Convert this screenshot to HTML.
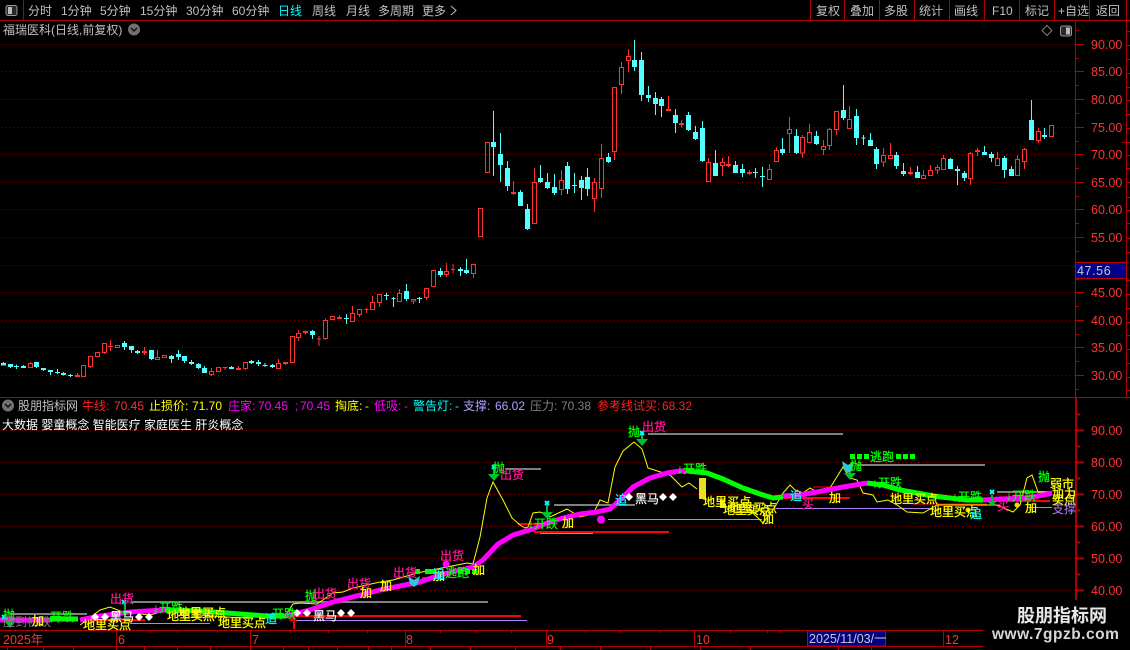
<!DOCTYPE html>
<html><head><meta charset="utf-8"><style>
html,body{margin:0;padding:0;background:#000;width:1130px;height:650px;overflow:hidden}
svg{display:block;position:absolute;left:0;top:0}
text{font-family:"WenQuanYi Zen Hei","Liberation Sans","Noto Sans CJK SC",sans-serif;font-size:12px}
.n{font-family:"Liberation Sans",sans-serif;font-size:12px}
.ax{font-family:"Liberation Sans",sans-serif;font-size:12.5px;fill:#ff3232}
.m{fill:#c0c0c0}
.y{fill:#ffff00;stroke:#ffff00;stroke-width:.3px}
.g{fill:#00ff00;stroke:#00ff00;stroke-width:.3px}
.p{fill:#ff1493;stroke:#ff1493;stroke-width:.3px}
.c{fill:#00ffff;stroke:#00ffff;stroke-width:.3px}
.w{fill:#fff;stroke:#fff;stroke-width:.2px}
.t{fill:#00ffff}
.l{shape-rendering:crispEdges}
</style></head><body>
<svg width="1130" height="650" viewBox="0 0 1130 650" xmlns="http://www.w3.org/2000/svg">
<rect width="1130" height="650" fill="#000"/>

<!-- frame -->
<g class="l" stroke="#b00000" stroke-width="1" fill="none">
<path d="M0 20.5H1130M23.5 0V20.5M810.5 0V20.5M844.5 0V20.5M879.5 0V20.5M914.5 0V20.5M949.5 0V20.5M984.5 0V20.5M1019.5 0V20.5M1054.5 0V20.5M1089.5 0V20.5M1126.5 0V397"/>
<path d="M1075.5 20V397"/>
<path d="M0 397.5H1130"/>
<path d="M0 630.5H983M0 646.5H983"/>
<path d="M116.5 630V646M250.5 630V646M405.5 630V646M546.5 630V646M694.5 630V646M943.5 630V646"/>
<path d="M150.5 630V633M177.5 630V633M217.5 630V633M290.5 630V633M328.5 630V633M367.5 630V633M440.5 630V633M476.5 630V633M511.5 630V633M585.5 630V633M620.5 630V633M659.5 630V633M730.5 630V633M767.5 630V633M780.5 630V633"/>
<path d="M7.5 646V650M43.5 646V650M73.5 646V650M116.5 646V650M144.5 646V650M177.5 646V650M210.5 646V650M250.5 646V650M283.5 646V650M308.5 646V650M337.5 646V650M368.5 646V650M391.5 646V650M430.5 646V650M470.5 646V650M515.5 646V650M560.5 646V650M600.5 646V650M650.5 646V650M700.5 646V650M750.5 646V650M838.5 646V650M871.5 646V650"/>
<!-- axis ticks upper -->
<path d="M1075 44.5H1084M1075 71.5H1084M1075 99.5H1084M1075 127.5H1084M1075 154.5H1084M1075 182.5H1084M1075 209.5H1084M1075 237.5H1084M1075 292.5H1084M1075 320.5H1084M1075 347.5H1084M1075 375.5H1084"/>
<path d="M1075 30.5H1079M1075 58.5H1079M1075 85.5H1079M1075 113.5H1079M1075 141.5H1079M1075 168.5H1079M1075 196.5H1079M1075 223.5H1079M1075 251.5H1079M1075 279.5H1079M1075 306.5H1079M1075 334.5H1079M1075 361.5H1079M1075 389.5H1079"/>
<path d="M1126 31.5H1130M1126 45.5H1130M1126 59.5H1130M1126 73.5H1130M1126 87.5H1130M1126 100.5H1130M1126 114.5H1130M1126 128.5H1130M1122 142.5H1130M1126 155.5H1130M1126 168.5H1130M1126 182.5H1130M1126 197.5H1130M1126 210.5H1130M1126 223.5H1130M1126 238.5H1130M1126 252.5H1130M1126 280.5H1130M1126 294.5H1130M1126 308.5H1130M1126 322.5H1130M1126 335.5H1130M1126 349.5H1130M1126 363.5H1130M1126 377.5H1130M1126 390.5H1130"/>
</g>
<g class="l" stroke="#b00000" stroke-width="2" fill="none">
<path d="M1076 397V600"/>
<path d="M1076 430.5H1084M1076 462.5H1084M1076 494.5H1084M1076 526.5H1084M1076 558.5H1084M1076 590.5H1084"/>
<path d="M1076 414.5H1080M1076 446.5H1080M1076 478.5H1080M1076 510.5H1080M1076 542.5H1080M1076 574.5H1080"/>
</g>

<!-- dotted grids -->
<g class="l" stroke="#800000" stroke-width="1" stroke-dasharray="1 3" fill="none">
<path d="M2 44.5H1075M2 71.5H1075M2 99.5H1075M2 127.5H1075M2 154.5H1075M2 182.5H1075M2 209.5H1075M2 237.5H1075M2 265.5H1075M2 292.5H1075M2 320.5H1075M2 347.5H1075M2 375.5H1075"/>
<path d="M2 430.5H1075M2 462.5H1075M2 494.5H1075M2 526.5H1075M2 558.5H1075M2 590.5H1075"/>
</g>

<!-- toolbar -->
<rect x="6" y="5.5" width="11" height="10" rx="2" fill="#2a2a2a" stroke="#999"/>
<rect x="8" y="7" width="4" height="7" fill="#bbb"/>
<g class="m">
<text x="28" y="15">分时</text>
<text x="61" y="15">1分钟</text>
<text x="100" y="15">5分钟</text>
<text x="140" y="15">15分钟</text>
<text x="186" y="15">30分钟</text>
<text x="232" y="15">60分钟</text>
<text x="278" y="15" class="t">日线</text>
<text x="312" y="15">周线</text>
<text x="346" y="15">月线</text>
<text x="378" y="15">多周期</text>
<text x="422" y="15">更多</text>
<text x="816" y="15">复权</text>
<text x="850" y="15">叠加</text>
<text x="884" y="15">多股</text>
<text x="919" y="15">统计</text>
<text x="954" y="15">画线</text>
<text x="992" y="15">F10</text>
<text x="1025" y="15">标记</text>
<text x="1058" y="15">+自选</text>
<text x="1096" y="15">返回</text>
<text x="3" y="34">福瑞医科(日线,前复权)</text>
</g>
<path d="M451 6l5 4.5-5 4.5" fill="none" stroke="#c0c0c0"/>
<circle cx="134" cy="29.5" r="6" fill="#707070"/>
<path d="M131 28l3 3 3-3" fill="none" stroke="#111" stroke-width="1.5"/>
<path d="M1047 25.5l5 5-5 5-5-5z" fill="none" stroke="#808080"/>
<rect x="1060.5" y="26" width="11" height="10" rx="2" fill="#2a2a2a" stroke="#999"/>
<rect x="1066" y="27.5" width="4" height="7" fill="#bbb"/>

<!-- upper axis labels -->
<g class="ax">
<text class="ax" x="1091" y="49">90.00</text>
<text class="ax" x="1091" y="76">85.00</text>
<text class="ax" x="1091" y="104">80.00</text>
<text class="ax" x="1091" y="132">75.00</text>
<text class="ax" x="1091" y="159">70.00</text>
<text class="ax" x="1091" y="187">65.00</text>
<text class="ax" x="1091" y="214">60.00</text>
<text class="ax" x="1091" y="242">55.00</text>
<text class="ax" x="1091" y="297">45.00</text>
<text class="ax" x="1091" y="325">40.00</text>
<text class="ax" x="1091" y="352">35.00</text>
<text class="ax" x="1091" y="380">30.00</text>
<text class="ax" x="1091" y="435">90.00</text>
<text class="ax" x="1091" y="467">80.00</text>
<text class="ax" x="1091" y="499">70.00</text>
<text class="ax" x="1091" y="531">60.00</text>
<text class="ax" x="1091" y="563">50.00</text>
<text class="ax" x="1091" y="595">40.00</text>
</g>
<rect class="l" x="1075.5" y="262.5" width="51" height="16" fill="#000088" stroke="#c00000"/>
<text class="n" x="1077" y="275" style="font-size:12.5px;fill:#c8c8c8;letter-spacing:.6px">47.56</text>

<!-- candles -->
<g class="l" stroke-width="3">
<g transform="translate(0 280) scale(.33333)">
<path fill="none" stroke="#ff3232" d="M91 246V250M85 251h12V262h-12zM232 279V285M226 286h12V289h-12zM244 257h12V289h-12zM265 229h12V260h-12zM271 261V264M286 218h12V229h-12zM307 191h12V217h-12zM313 218V222M331 180V213M325 199h12V200h-12zM346 196h12V202h-12zM433 201V225M427 214h12V217h-12zM472 210V232M466 233h12V238h-12zM487 226h12V232h-12zM634 264V273M628 274h12V284h-12zM634 285V288M649 263h12V274h-12zM675 261V270M669 262h12V263h-12zM715 258V264M709 265h12V269h-12zM730 248h12V265h-12zM736 266V270M835 237V249M829 250h12V265h-12zM850 248h12V250h-12zM856 251V255M871 169h12V247h-12zM895 150V160M889 161h12V173h-12zM895 174V183"/>
<path fill="#54ffff" stroke="#54ffff" d="M10 246V256M4 250h12V255h-12zM31 252V264M25 253h12V260h-12zM49 254V267M43 259h12V260h-12zM70 255V264M64 259h12V263h-12zM109 246V264M103 247h12V260h-12zM130 264V273M124 265h12V269h-12zM151 270V285M145 271h12V275h-12zM172 267V282M166 277h12V278h-12zM190 276V286M184 280h12V284h-12zM211 282V291M205 286h12V287h-12zM373 183V210M367 190h12V200h-12zM394 198V219M388 199h12V209h-12zM412 210V222M406 214h12V218h-12zM454 210V240M448 211h12V235h-12zM514 225V249M508 229h12V236h-12zM535 210V240M529 223h12V230h-12zM553 228V249M547 229h12V242h-12zM574 240V255M568 247h12V251h-12zM595 249V267M589 253h12V263h-12zM613 258V279M607 265h12V278h-12zM694 258V267M688 262h12V266h-12zM754 240V252M748 244h12V248h-12zM775 240V258M769 247h12V251h-12zM795 249V261M789 256h12V257h-12zM817 252V264M811 256h12V260h-12z"/>
</g>
<g transform="translate(280 200) scale(.33333)">
<path fill="none" stroke="#ff3232" d="M76 391V404M70 394h12V398h-12zM117 408V438M111 417h12V417h-12zM136 355V361M130 362h12V416h-12zM136 417V420M151 350h12V358h-12zM178 346V352M172 353h12V355h-12zM178 356V357M217 318V340M211 341h12V364h-12zM232 329h12V343h-12zM238 344V351M259 324V339M253 328h12V328h-12zM277 288V307M271 308h12V329h-12zM292 284h12V307h-12zM298 308V321M358 267V280M352 281h12V304h-12zM394 299h12V303h-12zM400 304V312M439 264V265M433 266h12V292h-12zM439 293V300M454 211h12V260h-12zM499 189V214M493 215h12V224h-12zM499 225V231M519 192V219M513 209h12V209h-12zM574 194h12V220h-12zM580 190V193M580 221V234M595 26h12V109h-12z"/>
<path fill="#54ffff" stroke="#54ffff" d="M97 390V417M91 394h12V404h-12zM199 342V372M193 355h12V356h-12zM319 279V300M313 286h12V287h-12zM340 291V321M334 296h12V296h-12zM379 252V303M373 274h12V296h-12zM418 291V309M412 295h12V296h-12zM481 204V231M475 214h12V224h-12zM541 201V228M535 208h12V212h-12zM559 177V222M553 211h12V218h-12z"/>
</g>
<g transform="translate(470 30) scale(.33333)">
<path fill="none" stroke="#ff3232" d="M46 337h12V428h-12zM130 453V495M124 488h12V491h-12zM193 414V457M187 458h12V580h-12zM274 420V451M268 452h12V478h-12zM274 479V495M373 444V457M367 458h12V505h-12zM373 506V546M394 342V385M388 386h12V475h-12zM394 476V504M427 173h12V364h-12zM433 365V390M454 96V112M448 113h12V163h-12zM454 164V192M475 57V79M469 80h12V91h-12zM475 92V126M595 198V237M589 238h12V242h-12zM634 270V292M628 280h12V284h-12zM715 384V397M709 398h12V455h-12zM757 384V397M751 398h12V406h-12zM757 407V438M775 378V411M769 404h12V406h-12zM838 420V435M832 427h12V431h-12z"/>
<path fill="#54ffff" stroke="#54ffff" d="M70 243V438M64 337h12V350h-12zM91 309V456M85 373h12V404h-12zM112 393V483M106 415h12V467h-12zM151 480V528M145 487h12V527h-12zM172 522V600M166 538h12V596h-12zM211 405V459M205 445h12V455h-12zM232 429V477M226 457h12V473h-12zM253 432V495M247 472h12V488h-12zM292 396V492M286 409h12V476h-12zM313 429V489M307 466h12V467h-12zM334 438V510M328 451h12V473h-12zM352 414V498M346 442h12V476h-12zM415 369V399M409 382h12V395h-12zM493 30V123M487 91h12V110h-12zM514 66V213M508 91h12V194h-12zM535 168V216M529 196h12V203h-12zM556 186V255M550 205h12V221h-12zM574 201V261M568 208h12V227h-12zM616 237V309M610 256h12V278h-12zM655 246V303M649 256h12V299h-12zM676 288V330M670 307h12V326h-12zM697 273V396M691 295h12V392h-12zM736 360V438M730 400h12V437h-12zM796 393V429M790 406h12V428h-12zM817 402V441M811 418h12V428h-12zM856 414V444M850 427h12V428h-12z"/>
</g>
<g transform="translate(760 70) scale(.33333)">
<path fill="none" stroke="#ff3232" d="M28 282V298M22 299h12V328h-12zM49 232V241M43 242h12V274h-12zM88 141V178M82 179h12V190h-12zM88 191V249M127 195V202M121 203h12V249h-12zM127 250V264M148 162V187M142 188h12V217h-12zM190 210V229M184 230h12V239h-12zM190 240V255M208 174V178M202 179h12V226h-12zM208 227V240M223 125h12V178h-12zM229 179V195M268 108V148M262 149h12V175h-12zM370 234V256M364 257h12V276h-12zM370 277V291M391 219V256M385 257h12V265h-12zM451 291V315M445 307h12V311h-12zM490 300V316M484 317h12V325h-12zM511 285V301M505 302h12V316h-12zM532 285V291M526 292h12V300h-12zM532 301V312M550 255V264M544 265h12V299h-12zM631 246V250M625 251h12V325h-12zM631 326V345M652 234V258M646 241h12V245h-12zM712 246V265M706 266h12V287h-12zM772 255V268M766 269h12V316h-12zM793 234V238M787 239h12V274h-12zM793 275V297M835 174V183M829 184h12V212h-12zM835 213V219M868 167h12V199h-12z"/>
<path fill="#54ffff" stroke="#54ffff" d="M7 291V351M1 319h12V320h-12zM67 204V255M61 238h12V248h-12zM109 177V252M103 199h12V248h-12zM169 183V225M163 199h12V221h-12zM250 45V150M244 121h12V143h-12zM289 117V225M283 139h12V203h-12zM310 195V225M304 204h12V204h-12zM331 189V228M325 211h12V227h-12zM349 231V297M343 238h12V281h-12zM409 246V297M403 256h12V287h-12zM430 279V318M424 304h12V311h-12zM472 288V324M466 307h12V323h-12zM571 264V297M565 268h12V296h-12zM592 288V345M586 298h12V302h-12zM613 303V333M607 310h12V323h-12zM673 228V255M667 247h12V254h-12zM694 246V276M688 253h12V263h-12zM733 258V324M727 265h12V299h-12zM754 288V318M748 298h12V317h-12zM814 90V210M808 151h12V209h-12zM853 174V207M847 196h12V200h-12z"/>
</g>
</g>

<!-- lower pane header -->
<circle cx="8" cy="405.5" r="6" fill="#707070"/>
<path d="M5 404l3 3 3-3" fill="none" stroke="#111" stroke-width="1.5"/>
<text x="18" y="410" class="m">股朋指标网</text>
<text x="82" y="410" fill="#ff2020">牛线:</text><text class="n" x="114" y="410" fill="#ff3232">70.45</text>
<text x="149" y="410" fill="#ffff00">止损价:</text><text class="n" x="192" y="410" fill="#ffff00">71.70</text>
<text x="228" y="410" fill="#ff00ff">庄家:</text><text class="n" x="258" y="410" fill="#ff00ff">70.45</text><text class="n" x="295" y="410" fill="#ff00ff">;</text><text class="n" x="300" y="410" fill="#ff00ff">70.45</text>
<text x="335" y="410" fill="#ffff00">掏底:</text><text class="n" x="365" y="410" fill="#ffff00">-</text>
<text x="374" y="410" fill="#ff00ff">低吸:</text><text class="n" x="404" y="410" fill="#ff00ff">-</text>
<text x="413" y="410" fill="#00ffff">警告灯:</text><text class="n" x="455" y="410" fill="#00ffff">-</text>
<text x="463" y="410" fill="#b0a0ff">支撑:</text><text class="n" x="495" y="410" fill="#b0a0ff">66.02</text>
<text x="530" y="410" fill="#808080">压力:</text><text class="n" x="561" y="410" fill="#808080">70.38</text>
<text x="597" y="410" fill="#ff2020">参考线试买:</text><text class="n" x="662" y="410" fill="#ff2020">68.32</text>
<text x="2" y="429" fill="#fff">大数据 婴童概念 智能医疗 家庭医生 肝炎概念</text>

<!-- horizontal signal lines -->
<g class="l" fill="none">
<path stroke="#808080" stroke-width="2" d="M648 434H843M505 469H541M554 505H635M131 602H488M10 614H87M857 465H985M997 492H1052"/>
<path stroke="#ff0000" stroke-width="2" d="M293 616H521M534 532H669M518 524H537M422 578H433M777 498H850M970 501H1050M83 620H145"/>
<path stroke="#ff0000" stroke-width="1" d="M813 487H833M913 504H987"/>
<path stroke="#b080ff" stroke-width="1" d="M293 620.5H527M608 519.5H760M540 533.5H593M776 508.5H930M750 519.5H762M1027 507.5H1052M130 623.5H210"/>
</g>

<!-- yellow thin indicator -->
<g fill="none" stroke="#ffff00" stroke-width="1">
<path d="M80 625L87 620L100 610L110 607L123 612L150 615L173 608L200 615L240 618L265 615L285 616L293 604L300 603L317 604L333 593L343 592L353 588L380 582L393 580L400 578L417 573L447 567L467 563L473 564L480 537L487 498L493 482L503 500L512 518L520 525L525 528L528 527L533 513L540 512L550 517L567 509L580 517L593 514L600 500L608 503L615 467L623 451L634 442L642 449L648 468L670 475L682 487L689 483L697 489"/>
<path d="M750 510L763 523L773 510L783 493L790 485L795 490L803 493L810 488L817 492L830 488L843 467L850 478L857 480L863 493L873 495L877 502L888 500L897 505L907 512L923 513L937 505L997 505L1013 512L1020 505L1027 478L1032 475L1038 492L1050 492"/>
</g>

<!-- magenta / green thick indicator -->
<g fill="none" stroke-width="5" stroke-linejoin="round">
<path stroke="#ff00ff" d="M0 620L50 620"/>
<path stroke="#00ff00" d="M50 619L78 619"/>
<path stroke="#ff00ff" d="M80 620L100 616L130 612L147 611L165 610"/>
<path stroke="#00ff00" d="M165 610L200 611L240 614L267 616L285 616"/>
<path stroke="#ff00ff" d="M285 616L310 610L333 602L380 590L400 586L420 582L440 575L473 567L483 560L498 544L513 535L523 532L533 529L547 523L563 518L580 514L597 512L610 509L620 500L633 487L650 478L667 473L680 471L687 471"/>
<path stroke="#00ff00" d="M687 471L707 473L723 479L743 488L760 494L773 498L783 497"/>
<path stroke="#ff00ff" d="M783 496L800 495L817 492L843 487L867 483"/>
<path stroke="#00ff00" d="M867 483L883 485L900 490L917 493L933 496L950 498L967 500L983 500"/>
<path stroke="#ff00ff" d="M983 500L1000 499L1027 498L1043 495L1052 493"/>
</g>
<rect x="699" y="478" width="7" height="21" fill="#e8e020"/>
<rect x="720" y="500" width="5" height="8" fill="#e8e020"/>

<!-- green squares -->
<g class="l" fill="#00ff00">
<path d="M415 569h5v5h-5zM425 569h5v5h-5zM430 569h5v5h-5zM458 569h5v5h-5zM465 569h5v5h-5zM472 569h5v5h-5z"/>
<path d="M850 454h5v5h-5zM857 454h5v5h-5zM864 454h5v5h-5zM896 454h5v5h-5zM903 454h5v5h-5zM910 454h5v5h-5z"/>
</g>

<!-- diamonds -->
<g fill="#ffffff">
<path d="M95 613l4 4-4 4-4-4zM105 613l4 4-4 4-4-4zM139 613l4 4-4 4-4-4zM149 613l4 4-4 4-4-4z"/>
<path d="M297 609l4 4-4 4-4-4zM307 609l4 4-4 4-4-4zM341 609l4 4-4 4-4-4zM351 609l4 4-4 4-4-4z"/>
<path d="M629 493l4 4-4 4-4-4zM663 493l4 4-4 4-4-4zM673 493l4 4-4 4-4-4z"/>
</g>

<!-- green arrows -->
<g fill="#00c030" stroke="none">
<path d="M124 604h2v7h5l-6 5-6-5h5z"/>
<path d="M493 466h2v8h5l-6 7-6-7h5z"/>
<path d="M546 505h2v7h5l-6 7-6-7h5z"/>
<path d="M641 433h2v6h5l-6 7-6-7h5z"/>
<path d="M849 470h2v3h5l-6 7-6-7h5z"/>
<path d="M5 622h10l-5 6z"/>
<path d="M991 495h2v6h4l-5 5-5-5h4z"/>
</g>
<path d="M293 629V621H289L293 616L297 621H295V629z" fill="#ff0000"/>

<!-- dots -->
<circle cx="601" cy="519.5" r="4" fill="#ff00ff"/>
<circle cx="446" cy="564" r="3.5" fill="#ff00ff"/>
<circle cx="1017" cy="505" r="2.5" fill="#ffd700"/>
<circle cx="968" cy="510" r="2.5" fill="#ffd700"/>

<!-- cyan x markers -->
<g stroke="#00ffff" stroke-width="2" fill="none">
<path d="M122 600l4 4m0-4l-4 4M492 465l4 4m0-4l-4 4M545 501l4 4m0-4l-4 4M640 431l4 4m0-4l-4 4M990 490l4 4m0-4l-4 4M2 615l4 4m0-4l-4 4"/>
</g>
<!-- butterflies -->
<path d="M408 576l6 4 6-4-2 8-4 3-4-3z" fill="#30c8d8"/>
<path d="M842 461l6 4 6-4-2 9-4 3-4-3z" fill="#30c8d8"/>

<!-- signal text -->
<text x="3" y="619" class="g">抛</text>
<text x="3" y="626" fill="#808080">压到初跌</text>
<text x="32" y="625" class="y">加</text>
<text x="50" y="621" class="g">开跌</text>
<text x="110" y="603" class="p">出货</text>
<text x="110" y="621" class="w">黑马</text>
<text x="83" y="629" class="y">地里买点</text>
<text x="153" y="612" class="g">↓开跌</text>
<text x="167" y="620" class="y">地里买点</text>
<text x="178" y="617" class="y">地里买点</text>
<text x="218" y="627" class="y">地里买点</text>
<text x="265" y="623" class="c">追</text>
<text x="272" y="618" class="g">开跌</text>
<text x="313" y="620" class="w">黑马</text>
<text x="305" y="600" class="g">抛</text>
<text x="313" y="598" class="p">出货</text>
<text x="347" y="588" class="p">出货</text>
<text x="360" y="597" class="y">加</text>
<text x="380" y="590" class="y">加</text>
<text x="393" y="577" class="p">出货</text>
<text x="433" y="580" class="y">加</text>
<text x="433" y="578" class="c">追</text>
<text x="445" y="577" class="g">逃跑</text>
<text x="440" y="560" class="p">出货</text>
<text x="473" y="574" class="y">加</text>
<text x="493" y="472" class="g">抛</text>
<text x="500" y="479" class="p">出货</text>
<text x="528" y="528" class="g">↓开跌</text>
<text x="562" y="527" class="y">加</text>
<text x="615" y="504" class="c">追</text>
<text x="635" y="503" class="w">黑马</text>
<text x="628" y="436" class="g">抛</text>
<text x="642" y="431" class="p">出货</text>
<text x="677" y="473" class="g">↓开跌</text>
<text x="703" y="506" class="y">地里买点</text>
<text x="723" y="514" class="y">地里买点</text>
<text x="729" y="512" class="y">地里买点</text>
<text x="762" y="523" class="y">加</text>
<text x="790" y="500" class="c">追</text>
<text x="802" y="508" class="p">买</text>
<text x="829" y="502" class="y">加</text>
<text x="850" y="470" class="g">抛</text>
<text x="870" y="461" class="g">逃跑</text>
<text x="872" y="487" class="g">↓开跌</text>
<text x="890" y="503" class="y">地里买点</text>
<text x="930" y="516" class="y">地里买点</text>
<text x="970" y="518" class="c">追</text>
<text x="952" y="501" class="g">↓开跌</text>
<text x="1006" y="500" class="g">↓开跌</text>
<text x="997" y="510" class="p">买</text>
<text x="1025" y="512" class="y">加</text>
<text x="1038" y="481" class="g">抛</text>
<text x="1050" y="488" class="y">弱市</text>
<text x="1052" y="498" class="y">加力</text>
<text x="1052" y="504" class="y">买点</text>
<text x="1052" y="513" fill="#b080ff">支撑</text>

<!-- date axis -->
<text class="n" x="3" y="644" fill="#ff3232" style="font-size:12.5px">2025年</text>
<text class="n" x="118" y="644" fill="#ff3232" style="font-size:12.5px">6</text>
<text class="n" x="252" y="644" fill="#ff3232" style="font-size:12.5px">7</text>
<text class="n" x="406" y="644" fill="#ff3232" style="font-size:12.5px">8</text>
<text class="n" x="547" y="644" fill="#ff3232" style="font-size:12.5px">9</text>
<text class="n" x="696" y="644" fill="#ff3232" style="font-size:12.5px">10</text>
<text class="n" x="945" y="644" fill="#ff3232" style="font-size:12.5px">12</text>
<rect class="l" x="807.5" y="631" width="78" height="15" fill="#000080" stroke="#c00000"/>
<text class="n" x="809" y="643" fill="#c8c8c8" style="font-size:12.5px">2025/11/03/一</text>

<!-- watermark -->
<rect x="983" y="600" width="147" height="50" fill="#000"/>
<text x="1017" y="622" style="font-size:18px;font-weight:700;fill:#e8e8e8;font-family:'Noto Sans CJK SC','WenQuanYi Zen Hei',sans-serif">股朋指标网</text>
<text x="992" y="639" style="font-size:15.5px;font-weight:700;fill:#d8d8d8;font-family:'Liberation Sans',sans-serif;letter-spacing:.5px">www.7gpzb.com</text>
</svg>
</body></html>
